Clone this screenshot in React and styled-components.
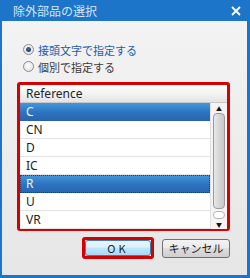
import React from 'react';
import styled, { createGlobalStyle } from 'styled-components';

const GlobalStyle = createGlobalStyle`
  html, body {
    margin: 0;
    padding: 0;
    background: #ffffff;
  }
  body {
    font-family: "Noto Sans", "Noto Sans CJK JP", sans-serif;
  }
`;

const Window = styled.div`
  width: 250px;
  height: 278px;
  box-sizing: border-box;
  display: flex;
  flex-direction: column;
  background: #1c75c9;
  padding: 0 3px 3px 2px;
`;

const TitleBar = styled.div`
  height: 21px;
  display: flex;
  align-items: center;
  justify-content: space-between;
  padding: 0 4px 0 11px;
  color: #d4e6f8;
  font-family: "Noto Sans CJK JP", sans-serif;
  font-size: 12px;
`;

const CloseIcon = styled.svg`
  width: 10px;
  height: 10px;
  margin-right: 2px;
`;

const Body = styled.div`
  flex: 1;
  display: flex;
  flex-direction: column;
  background: linear-gradient(180deg, #f3f3f3 0%, #e6e6e6 100%);
  padding-top: 20px;
`;

const RadioGroup = styled.div`
  display: flex;
  flex-direction: column;
  padding-left: 21px;
`;

const RadioRow = styled.label`
  height: 17px;
  display: flex;
  align-items: center;
  gap: 4px;
  font-family: "Noto Sans CJK JP", sans-serif;
  font-size: 11px;
  color: ${p => (p.checked ? '#1f5cad' : '#3a3a3a')};
`;

const RadioCircle = styled.span`
  width: 9px;
  height: 9px;
  border-radius: 50%;
  border: 1px solid #8c8c8c;
  background: radial-gradient(circle at 50% 40%, #ffffff 0%, #dcdcdc 100%);
  display: flex;
  align-items: center;
  justify-content: center;
  &::after {
    content: '';
    display: ${p => (p.checked ? 'block' : 'none')};
    width: 5px;
    height: 5px;
    border-radius: 50%;
    background: radial-gradient(circle at 40% 35%, #4a6fa0 0%, #13294d 100%);
  }
`;

const HighlightFrame = styled.div`
  margin: 7px 0 0 15px;
  width: 213px;
  height: 149px;
  box-sizing: border-box;
  border: 3px solid #d50000;
  border-radius: 3px;
  display: flex;
`;

const ListBox = styled.div`
  flex: 1;
  display: flex;
  flex-direction: column;
  background: #ffffff;
`;

const ListHeader = styled.div`
  height: 19px;
  box-sizing: border-box;
  display: flex;
  align-items: center;
  padding-left: 6px;
  font-size: 12px;
  color: #222;
  background: linear-gradient(180deg, #ffffff 0%, #f3f3f3 50%, #e4e4e4 100%);
  border-bottom: 1px solid #c8c8c8;
`;

const ListBodyRow = styled.div`
  flex: 1;
  display: flex;
`;

const Rows = styled.div`
  flex: 1;
  display: flex;
  flex-direction: column;
`;

const Row = styled.div`
  height: 18px;
  box-sizing: border-box;
  display: flex;
  align-items: center;
  padding-left: 6px;
  font-size: 12px;
  color: ${p => (p.selected ? '#eaf3fc' : '#222')};
  background: ${p =>
    p.selected ? 'linear-gradient(180deg, #4496dc 0%, #2d74c0 55%, #2867b0 100%)' : '#ffffff'};
  border-bottom: 1px solid ${p => (p.selected ? '#2a62a6' : '#e2e2e2')};
  outline: ${p => (p.focused ? '1px dotted #1a3e6e' : 'none')};
  outline-offset: -1px;
`;

const ScrollBar = styled.div`
  width: 16px;
  display: flex;
  flex-direction: column;
  align-items: center;
  background: #f4f4f4;
  border-left: 1px solid #e0e0e0;
`;

const Arrow = styled.div`
  height: 10px;
  display: flex;
  align-items: center;
  justify-content: center;
  font-size: 6px;
  color: #111;
`;

const Thumb = styled.div`
  width: 12px;
  height: 96px;
  box-sizing: border-box;
  border: 1px solid #9a9a9a;
  border-radius: 4px;
  background: linear-gradient(90deg, #e8e8e8 0%, #d6d6d6 50%, #c8c8c8 100%);
`;

const Track = styled.div`
  flex: 1;
  width: 12px;
  margin-top: 2px;
  box-sizing: border-box;
  border: 1px solid #b4b4b4;
  border-radius: 4px;
  background: #ffffff;
`;

const ButtonRow = styled.div`
  display: flex;
  align-items: center;
  margin: 6px 0 0 80px;
  gap: 8px;
`;

const FocusFrame = styled.div`
  width: 72px;
  height: 22px;
  box-sizing: border-box;
  border: 3px solid #d50000;
  border-radius: 3px;
  display: flex;
`;

const Button = styled.button`
  flex: ${p => (p.fill ? 1 : 'none')};
  width: ${p => (p.fill ? 'auto' : '68px')};
  height: ${p => (p.fill ? 'auto' : '19px')};
  margin: 0;
  padding: 0;
  box-sizing: border-box;
  border: 1px solid ${p => (p.primary ? '#3c7fb1' : '#707070')};
  border-radius: 3px;
  background: ${p =>
    p.primary
      ? 'linear-gradient(180deg, #eaf6fd 0%, #d9f0fc 45%, #bee6fd 50%, #a7d9f5 100%)'
      : 'linear-gradient(180deg, #f2f2f2 0%, #ebebeb 45%, #dddddd 50%, #cfcfcf 100%)'};
  font-family: "Noto Sans CJK JP", sans-serif;
  font-size: 11px;
  letter-spacing: ${p => (p.primary ? '3px' : '0')};
  color: #222;
  display: flex;
  align-items: center;
  justify-content: center;
`;

const items = ['C', 'CN', 'D', 'IC', 'R', 'U', 'VR'];
const selected = ['C', 'R'];

export default function App() {
  return (
    <>
      <GlobalStyle />
      <Window>
        <TitleBar>
          <span>除外部品の選択</span>
          <CloseIcon viewBox="0 0 10 10">
            <path d="M1 1 L9 9 M9 1 L1 9" stroke="#ffffff" strokeWidth="1.8" />
          </CloseIcon>
        </TitleBar>
        <Body>
          <RadioGroup>
            <RadioRow checked>
              <RadioCircle checked />
              接頭文字で指定する
            </RadioRow>
            <RadioRow>
              <RadioCircle />
              個別で指定する
            </RadioRow>
          </RadioGroup>
          <HighlightFrame>
            <ListBox>
              <ListHeader>Reference</ListHeader>
              <ListBodyRow>
                <Rows>
                  {items.map(it => (
                    <Row key={it} selected={selected.includes(it)} focused={it === 'R'}>
                      {it}
                    </Row>
                  ))}
                </Rows>
                <ScrollBar>
                  <Arrow>▲</Arrow>
                  <Thumb />
                  <Track />
                  <Arrow>▼</Arrow>
                </ScrollBar>
              </ListBodyRow>
            </ListBox>
          </HighlightFrame>
          <ButtonRow>
            <FocusFrame>
              <Button primary fill>OK</Button>
            </FocusFrame>
            <Button>キャンセル</Button>
          </ButtonRow>
        </Body>
      </Window>
    </>
  );
}
